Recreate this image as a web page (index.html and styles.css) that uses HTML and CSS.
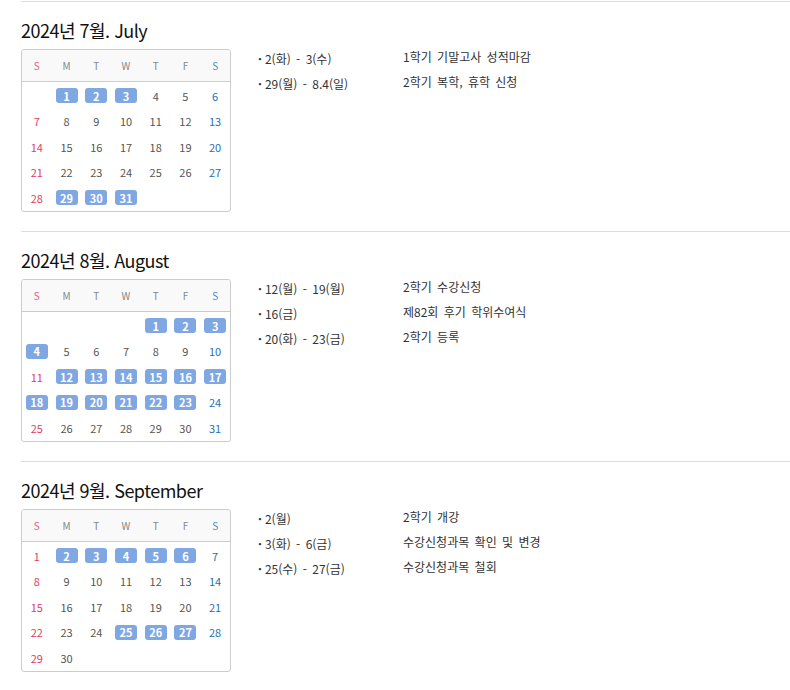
FILE: index.html
```html
<!DOCTYPE html>
<html lang="ko">
<head>
<meta charset="utf-8">
<title>학사일정</title>
<link rel="stylesheet" href="styles.css">
</head>
<body>
<div class="page">

<section class="month">
  <h2 class="title">2024년 7월. July</h2>
  <div class="row">
    <div class="cal">
      <div class="head"><span class="sun">S</span><span>M</span><span>T</span><span>W</span><span>T</span><span>F</span><span class="sat">S</span></div>
      <div class="days">
        <span></span><span class="ev">1</span><span class="ev">2</span><span class="ev">3</span><span>4</span><span>5</span><span class="sat">6</span>
        <span class="sun">7</span><span>8</span><span>9</span><span>10</span><span>11</span><span>12</span><span class="sat">13</span>
        <span class="sun">14</span><span>15</span><span>16</span><span>17</span><span>18</span><span>19</span><span class="sat">20</span>
        <span class="sun">21</span><span>22</span><span>23</span><span>24</span><span>25</span><span>26</span><span class="sat">27</span>
        <span class="sun">28</span><span class="ev">29</span><span class="ev">30</span><span class="ev">31</span>
      </div>
    </div>
    <ul class="events">
      <li><span class="date">2(화) - 3(수)</span><span class="desc">1학기 기말고사 성적마감</span></li>
      <li><span class="date">29(월) - 8.4(일)</span><span class="desc">2학기 복학, 휴학 신청</span></li>
    </ul>
  </div>
</section>

<section class="month">
  <h2 class="title">2024년 8월. August</h2>
  <div class="row">
    <div class="cal">
      <div class="head"><span class="sun">S</span><span>M</span><span>T</span><span>W</span><span>T</span><span>F</span><span class="sat">S</span></div>
      <div class="days">
        <span></span><span></span><span></span><span></span><span class="ev">1</span><span class="ev">2</span><span class="ev">3</span>
        <span class="ev">4</span><span>5</span><span>6</span><span>7</span><span>8</span><span>9</span><span class="sat">10</span>
        <span class="sun">11</span><span class="ev">12</span><span class="ev">13</span><span class="ev">14</span><span class="ev">15</span><span class="ev">16</span><span class="ev">17</span>
        <span class="ev">18</span><span class="ev">19</span><span class="ev">20</span><span class="ev">21</span><span class="ev">22</span><span class="ev">23</span><span class="sat">24</span>
        <span class="sun">25</span><span>26</span><span>27</span><span>28</span><span>29</span><span>30</span><span class="sat">31</span>
      </div>
    </div>
    <ul class="events">
      <li><span class="date">12(월) - 19(월)</span><span class="desc">2학기 수강신청</span></li>
      <li><span class="date">16(금)</span><span class="desc">제82회 후기 학위수여식</span></li>
      <li><span class="date">20(화) - 23(금)</span><span class="desc">2학기 등록</span></li>
    </ul>
  </div>
</section>

<section class="month">
  <h2 class="title">2024년 9월. September</h2>
  <div class="row">
    <div class="cal">
      <div class="head"><span class="sun">S</span><span>M</span><span>T</span><span>W</span><span>T</span><span>F</span><span class="sat">S</span></div>
      <div class="days">
        <span class="sun">1</span><span class="ev">2</span><span class="ev">3</span><span class="ev">4</span><span class="ev">5</span><span class="ev">6</span><span class="sat">7</span>
        <span class="sun">8</span><span>9</span><span>10</span><span>11</span><span>12</span><span>13</span><span class="sat">14</span>
        <span class="sun">15</span><span>16</span><span>17</span><span>18</span><span>19</span><span>20</span><span class="sat">21</span>
        <span class="sun">22</span><span>23</span><span>24</span><span class="ev">25</span><span class="ev">26</span><span class="ev">27</span><span class="sat">28</span>
        <span class="sun">29</span><span>30</span>
      </div>
    </div>
    <ul class="events">
      <li><span class="date">2(월)</span><span class="desc">2학기 개강</span></li>
      <li><span class="date">3(화) - 6(금)</span><span class="desc">수강신청과목 확인 및 변경</span></li>
      <li><span class="date">25(수) - 27(금)</span><span class="desc">수강신청과목 철회</span></li>
    </ul>
  </div>
</section>

</div>
</body>
</html>
```

FILE: styles.css
```css
* { box-sizing: border-box; }

html, body {
  margin: 0;
  padding: 0;
  background: #fff;
}

body {
  font-family: "Noto Sans CJK KR", "Noto Sans", sans-serif;
  color: #333;
}

.page {
  padding: 1px 0 0 21px;
}

.month {
  border-top: 1px solid #dddddd;
  padding: 16px 0 19.5px;
}

.title {
  margin: 0 0 7px;
  font-size: 18px;
  line-height: 24px;
  font-weight: 400;
  color: #111;
  letter-spacing: -0.5px;
}

.row {
  display: flex;
  align-items: flex-start;
}

.cal {
  width: 210px;
  border: 1px solid #cccccc;
  border-radius: 3px;
  overflow: hidden;
}

.head {
  display: grid;
  grid-template-columns: repeat(7, 1fr);
  height: 32px;
  background: #f9f9f9;
  border-bottom: 1px solid #cccccc;
}

.head span {
  display: flex;
  align-items: center;
  justify-content: center;
  font-size: 10px;
  color: #888;
}

.head .sun { color: #e0607a; }
.head .sat { color: #4a8cc4; }

.days {
  display: grid;
  grid-template-columns: repeat(7, 1fr);
  grid-auto-rows: 25.5px;
  padding-top: 1px;
}

.days span {
  display: flex;
  align-items: center;
  justify-content: center;
  font-size: 11px;
  color: #555;
}

.days .sun { color: #e0405e; }
.days .sat { color: #1f6fae; }

.days .ev {
  justify-self: center;
  align-self: center;
  width: 22px;
  height: 15px;
  border-radius: 3px;
  background: #7fa7e2;
  color: #fff;
  font-weight: 700;
}

.events {
  list-style: none;
  margin: 0 0 0 27px;
  padding: 0;
  display: flex;
  flex-direction: column;
  gap: 5px;
}

.events li {
  display: flex;
  align-items: flex-start;
  font-size: 12px;
  color: #333;
}

.date {
  width: 145px;
  line-height: 20px;
  word-spacing: 2px;
}

.date::before {
  content: "·";
  margin-right: 3px;
  font-weight: 700;
}

.desc {
  line-height: 16px;
  word-spacing: 2px;
}
```
